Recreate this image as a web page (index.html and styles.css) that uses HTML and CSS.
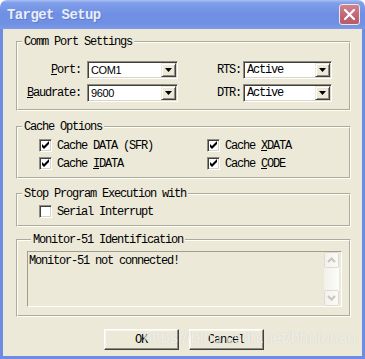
FILE: index.html
```html
<!DOCTYPE html>
<html lang="en">
<head>
    <meta charset="UTF-8">
    <title>Target Setup</title>
    <link rel="stylesheet" href="styles.css">
</head>
<body>
    <div class="window">
        <div class="titlebar">
            <span class="title">Target Setup</span>
            <span class="close-btn">
                <svg width="11" height="11" viewBox="0 0 11 11"><path d="M1 1 L10 10 M10 1 L1 10" stroke="#fff" stroke-width="2.2" stroke-linecap="square"/></svg>
            </span>
        </div>

        <div class="client">
            <fieldset class="group comm">
                <legend>Comm Port Settings</legend>
                <div class="comm-grid">
                    <label class="lbl lbl-left"><u>P</u>ort:</label>
                    <div class="combo combo-sans">
                        <span class="combo-value">COM1</span>
                        <span class="drop-btn"><svg width="7" height="4" viewBox="0 0 7 4"><polygon points="0,0 7,0 3.5,4" fill="#000"/></svg></span>
                    </div>
                    <label class="lbl lbl-right">RTS:</label>
                    <div class="combo">
                        <span class="combo-value">Active</span>
                        <span class="drop-btn"><svg width="7" height="4" viewBox="0 0 7 4"><polygon points="0,0 7,0 3.5,4" fill="#000"/></svg></span>
                    </div>

                    <label class="lbl lbl-left"><u>B</u>audrate:</label>
                    <div class="combo combo-sans">
                        <span class="combo-value">9600</span>
                        <span class="drop-btn"><svg width="7" height="4" viewBox="0 0 7 4"><polygon points="0,0 7,0 3.5,4" fill="#000"/></svg></span>
                    </div>
                    <label class="lbl lbl-right">DTR:</label>
                    <div class="combo">
                        <span class="combo-value">Active</span>
                        <span class="drop-btn"><svg width="7" height="4" viewBox="0 0 7 4"><polygon points="0,0 7,0 3.5,4" fill="#000"/></svg></span>
                    </div>
                </div>
            </fieldset>

            <fieldset class="group cache">
                <legend>Cache Options</legend>
                <div class="check-grid">
                    <div class="check-item">
                        <span class="checkbox"><svg width="9" height="9" viewBox="0 0 9 9"><polygon points="1,3 3,5 8,0 8,3 3,8 1,6" fill="#000"/></svg></span>
                        <span>Cache DATA (SFR)</span>
                    </div>
                    <div class="check-item">
                        <span class="checkbox"><svg width="9" height="9" viewBox="0 0 9 9"><polygon points="1,3 3,5 8,0 8,3 3,8 1,6" fill="#000"/></svg></span>
                        <span>Cache <u>X</u>DATA</span>
                    </div>
                    <div class="check-item">
                        <span class="checkbox"><svg width="9" height="9" viewBox="0 0 9 9"><polygon points="1,3 3,5 8,0 8,3 3,8 1,6" fill="#000"/></svg></span>
                        <span>Cache <u>I</u>DATA</span>
                    </div>
                    <div class="check-item">
                        <span class="checkbox"><svg width="9" height="9" viewBox="0 0 9 9"><polygon points="1,3 3,5 8,0 8,3 3,8 1,6" fill="#000"/></svg></span>
                        <span>Cache <u>C</u>ODE</span>
                    </div>
                </div>
            </fieldset>

            <fieldset class="group stop">
                <legend>Stop Program Execution with</legend>
                <div class="check-grid">
                    <div class="check-item">
                        <span class="checkbox"></span>
                        <span>Serial Interrupt</span>
                    </div>
                </div>
            </fieldset>

            <fieldset class="group monitor">
                <legend>Monitor-51 Identification</legend>
                <div class="textbox">
                    <div class="textbox-text">Monitor-51 not connected!</div>
                    <div class="scrollbar">
                        <span class="scroll-btn"><svg width="9" height="6" viewBox="0 0 9 6"><polyline points="1,5 4.5,1.5 8,5" fill="none" stroke="#c9c7bb" stroke-width="2"/></svg></span>
                        <span class="scroll-track"></span>
                        <span class="scroll-btn"><svg width="9" height="6" viewBox="0 0 9 6"><polyline points="1,1 4.5,4.5 8,1" fill="none" stroke="#c9c7bb" stroke-width="2"/></svg></span>
                    </div>
                </div>
            </fieldset>

            <div class="buttons">
                <button class="btn">OK</button>
                <button class="btn">Cancel</button>
            </div>
        </div>

        <div class="watermark">https://blog.csdn.net/bhniunan</div>
    </div>
</body>
</html>
```

FILE: styles.css
```css
* {
    margin: 0;
    padding: 0;
    box-sizing: border-box;
}

body {
    background: #fff;
}

.window {
    position: relative;
    width: 365px;
    height: 359px;
    display: flex;
    flex-direction: column;
    font-family: "Liberation Mono", "Courier New", Courier, "Nimbus Mono PS", FreeMono, serif;
    font-size: 12px;
    letter-spacing: -1.2px;
    color: #000;
    overflow: hidden;
}

.titlebar {
    height: 29px;
    flex: none;
    display: flex;
    align-items: center;
    justify-content: space-between;
    padding: 0 5px 0 7px;
    border-radius: 7px 7px 0 0;
    background: linear-gradient(#a9bff3 0, #7f9ee9 3px, #6f8fe4 14px, #7090e4 24px, #7d9ae6 29px);
}

.title {
    font-weight: bold;
    font-size: 14px;
    letter-spacing: -0.6px;
    color: #e8eefb;
    text-shadow: 1px 1px 0 rgba(60, 80, 150, 0.35);
}

.close-btn {
    width: 21px;
    height: 21px;
    display: flex;
    align-items: center;
    justify-content: center;
    border: 1px solid #f3e4e8;
    border-radius: 3px;
    background: linear-gradient(#d1838f, #c06472 60%, #b85c6b);
}

.client {
    flex: 1;
    background: #ece9d8;
    border: 3px solid #6d8ce3;
    border-top: 0;
    padding: 6px 11px 0 13px;
}

.group {
    border: 2px groove #fffff2;
    min-inline-size: 0;
}

.group legend {
    margin-left: 4px;
    padding: 0 2px;
    line-height: 14px;
}

.comm {
    padding: 12px 0 7px;
}

.cache {
    margin-top: 9px;
    padding: 5px 0 7px;
}

.stop {
    margin-top: 8px;
    padding: 4px 0 7px;
}

.monitor {
    margin-top: 6px;
    padding: 4px 7px 8px 9px;
}

/* comm port rows */
.comm-grid {
    display: grid;
    grid-template-columns: 69px 91px 65px 89px;
    row-gap: 5px;
}

.lbl {
    display: flex;
    align-items: center;
    justify-content: flex-end;
    height: 18px;
}

.lbl-left {
    padding-right: 6px;
}

.lbl-right {
    padding-right: 2px;
}

.combo {
    height: 18px;
    display: flex;
    align-items: center;
    background: #fff;
    border: 1px solid;
    border-color: #8f8d80 #fff #fff #8f8d80;
    box-shadow: inset 1px 1px 0 #3f3f3f, inset -1px -1px 0 #d8d5c6;
    padding: 1px;
}

.combo-value {
    flex: 1;
    padding-left: 2px;
}

.combo-sans .combo-value {
    font-family: "Liberation Sans", Arial, sans-serif;
    font-size: 11px;
    letter-spacing: -0.4px;
}

.drop-btn {
    width: 15px;
    height: 14px;
    display: flex;
    align-items: center;
    justify-content: center;
    background: #ece9d8;
    border: 1px solid;
    border-color: #ece9d8 #404040 #404040 #ece9d8;
    box-shadow: inset 1px 1px 0 #fff, inset -1px -1px 0 #8f8d80;
}

/* checkboxes */
.check-grid {
    display: grid;
    grid-template-columns: 168px auto;
    row-gap: 5px;
    padding-left: 21px;
}

.check-item {
    display: flex;
    align-items: center;
    gap: 5px;
    height: 13px;
}

.checkbox {
    width: 13px;
    height: 13px;
    display: flex;
    align-items: center;
    justify-content: center;
    background: #fff;
    border: 1px solid;
    border-color: #8f8d80 #fff #fff #8f8d80;
    box-shadow: inset 1px 1px 0 #404040, inset -1px -1px 0 #d8d5c6;
}

/* monitor text box */
.textbox {
    height: 56px;
    display: flex;
    border: 1px solid;
    border-color: #a19e90 #fff #fff #a19e90;
}

.textbox-text {
    flex: 1;
    padding: 2px 1px;
    line-height: 14px;
}

.scrollbar {
    width: 15px;
    margin-right: 2px;
    display: flex;
    flex-direction: column;
    background: linear-gradient(90deg, #f1f0ea, #fdfdfb);
}

.scroll-btn {
    height: 16px;
    display: flex;
    align-items: center;
    justify-content: center;
    border: 1px solid #dedcd2;
    border-radius: 2px;
    background: linear-gradient(90deg, #f2f1ec, #fafaf7);
}

.scroll-track {
    flex: 1;
}

/* buttons */
.buttons {
    margin-top: 12px;
    display: flex;
    justify-content: center;
    gap: 10px;
}

.btn {
    width: 75px;
    height: 21px;
    font: inherit;
    letter-spacing: inherit;
    color: #000;
    background: #ece9d8;
    border: 1px solid;
    border-color: #fff #404040 #404040 #fff;
    box-shadow: inset -1px -1px 0 #8f8d80, inset 1px 1px 0 #f7f6ef;
}

.watermark {
    position: absolute;
    left: 143px;
    top: 329px;
    font-family: "Liberation Sans", Arial, sans-serif;
    font-size: 16px;
    letter-spacing: 0;
    color: rgba(255, 255, 255, 0.7);
    text-shadow: 0 0 1px rgba(120, 120, 120, 0.3);
    pointer-events: none;
}
```
